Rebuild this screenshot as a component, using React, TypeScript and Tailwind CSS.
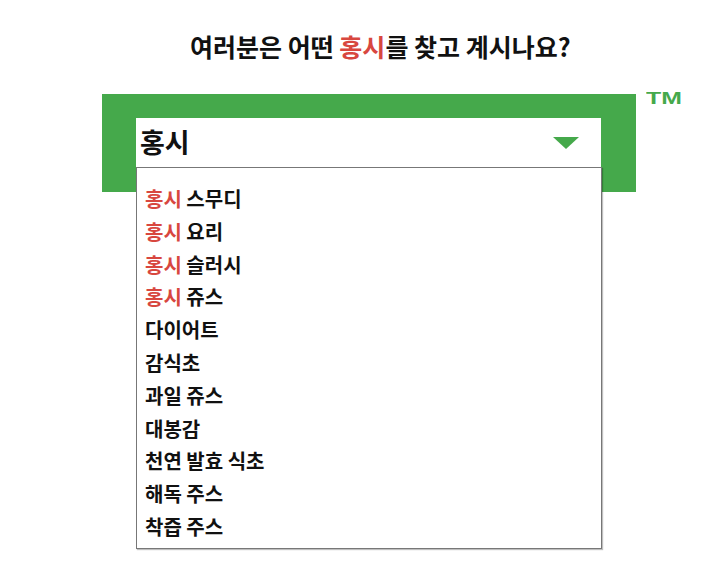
const FONT = { fontFamily: '"Noto Sans CJK KR", "Noto Sans", sans-serif' };

const OPTIONS: { hit: boolean; rest: string }[] = [
  { hit: true, rest: "스무디" },
  { hit: true, rest: "요리" },
  { hit: true, rest: "슬러시" },
  { hit: true, rest: "쥬스" },
  { hit: false, rest: "다이어트" },
  { hit: false, rest: "감식초" },
  { hit: false, rest: "과일 쥬스" },
  { hit: false, rest: "대봉감" },
  { hit: false, rest: "천연 발효 식초" },
  { hit: false, rest: "해독 주스" },
  { hit: false, rest: "착즙 주스" },
];

export default function App() {
  return (
    <div className="h-[570px] w-[720px] overflow-hidden bg-white text-[#111]" style={FONT}>
      <h1 className="pt-[28px] pl-[190px] text-[25px] font-bold leading-[36px]">
        여러분은 어떤 <span className="text-[#d8473f]">홍시</span>를 찾고 계시나요?
      </h1>

      <div className="mt-[30px] flex items-start pl-[102px]">
        <div className="relative h-[98px] w-[534px] bg-[#45a94b] pt-[24px] pl-[34px]">
          <div className="flex h-[49px] w-[465px] items-center justify-between bg-white pl-[4px] pr-[22px]">
            <span className="text-[27px] font-bold">홍시</span>
            <svg width="26" height="12" viewBox="0 0 26 12">
              <path d="M0 0 H26 L13 12 Z" fill="#45a94b" />
            </svg>
          </div>

          <ul className="absolute left-[34px] top-[73px] h-[382px] w-[466px] border border-[#777] bg-white pt-[15px] pl-[8px] shadow-[1px_1px_1px_rgba(0,0,0,0.25)]">
            {OPTIONS.map((o) => (
              <li key={o.rest} className="text-[20px] font-bold leading-[32.8px]">
                {o.hit && <span className="text-[#d8473f]">홍시 </span>}
                {o.rest}
              </li>
            ))}
          </ul>
        </div>
        <span
          className="ml-[10px] -mt-[2px] inline-block origin-left scale-x-[1.55] text-[16px] font-black leading-[14px] text-[#45a94b]"
          style={{ fontFamily: '"Liberation Sans", sans-serif' }}
        >
          TM
        </span>
      </div>
    </div>
  );
}
